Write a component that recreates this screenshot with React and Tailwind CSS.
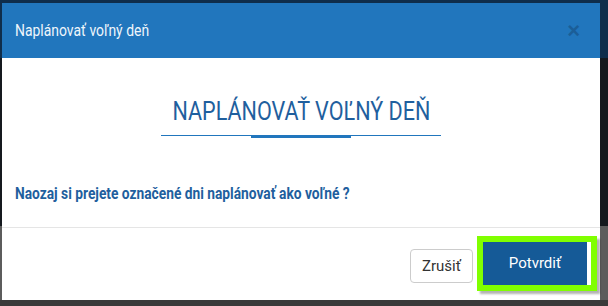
import React from "react";

export default function App() {
  const font = { fontFamily: '"Roboto", "Liberation Sans", sans-serif' };
  return (
    <div className="relative w-[608px] h-[306px] overflow-hidden bg-[#15191e]">
      {/* backdrop pieces */}
      <div className="absolute left-0 top-0 w-[608px] h-[58px] bg-[#0f2d4b]" />
      <div className="absolute left-0 top-[226px] w-[608px] h-[80px] bg-[#5c5c5c]" />
      <div className="absolute left-0 top-[300px] w-[608px] h-[6px] bg-[#3a3a3a]" />
      <div className="relative pl-[2px] pt-[3px] w-[600px]">
        <div className="w-[598px] bg-white flex flex-col">
          <div className="h-[55px] bg-[#2176bd] flex items-center justify-between pl-[13px] pr-[20px]">
            <span className="inline-block origin-left scale-x-[0.82] text-[17px] text-[#eef5fb]" style={font}>Naplánovať voľný deň</span>
            <span className="text-[22px] leading-none font-bold text-[#1b5e98]" style={{ fontFamily: '"Liberation Sans", sans-serif' }}>×</span>
          </div>
          <div className="h-[169px] flex flex-col px-[13px]">
            <div className="flex flex-col items-center pt-[37px]">
              <div className="origin-center scale-x-[0.83] text-[26px] leading-[32px] font-normal text-[#1f5f9e]" style={font}>NAPLÁNOVAŤ VOĽNÝ DEŇ</div>
              <div className="mt-[8px] w-[280px] h-[1px] bg-[#2176bd] flex justify-center">
                <div className="w-[100px] h-[3px] bg-[#2176bd]" />
              </div>
            </div>
            <div className="mt-[46px] origin-left scale-x-[0.86] whitespace-nowrap text-[16px] font-bold text-[#1f5f9e]" style={font}>Naozaj si prejete označené dni naplánovať ako voľné ?</div>
          </div>
          <div className="h-[73px] border-t border-[#e5e5e5] flex items-start justify-end pr-[3px]">
            <button className="mt-[21px] w-[63px] h-[34px] rounded-[4px] border border-[#cccccc] bg-white text-[15px] text-[#333333]" style={font}>Zrušiť</button>
            <div className="ml-[4px] mt-[8px] border-[6px] border-[#80ff00] bg-white pr-[4px] shadow-[3px_3px_2px_rgba(0,0,0,0.3)]">
              <button className="w-[104px] h-[43px] bg-[#155a97] text-white text-[15px]" style={font}>Potvrdiť</button>
            </div>
          </div>
        </div>
      </div>
    </div>
  );
}
